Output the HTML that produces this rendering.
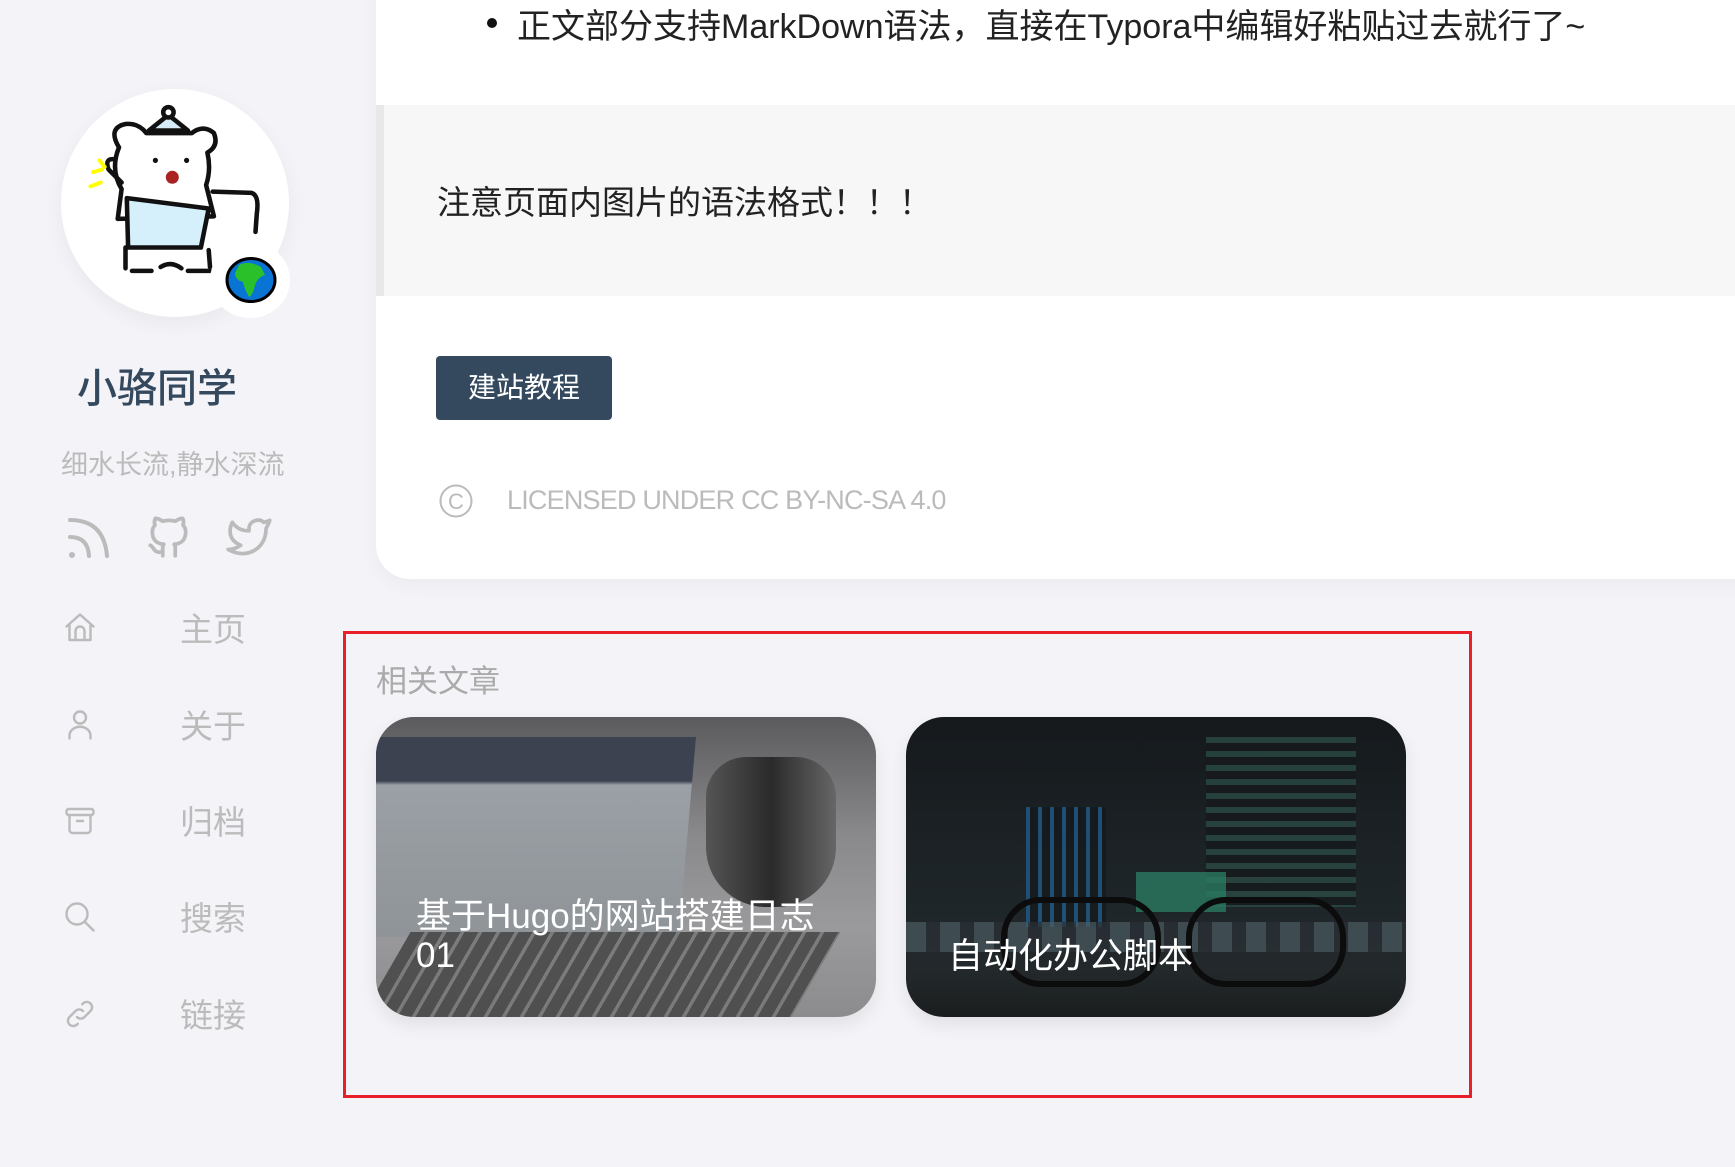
<!DOCTYPE html>
<html><head><meta charset="utf-8">
<style>
*{margin:0;padding:0;box-sizing:border-box}
html,body{width:1735px;height:1167px;overflow:hidden;background:#f4f4f8;font-family:"Liberation Sans","Noto Sans CJK SC",sans-serif}
.abs{position:absolute}
.main{position:absolute;left:376px;top:-40px;width:1400px;height:619px;background:#fff;border-radius:0 0 0 34px;box-shadow:0 6px 20px rgba(0,0,0,0.04)}
.t{position:absolute;white-space:nowrap}
.menu{color:#bbb;font-size:33px}
.card{position:absolute;top:717px;width:500px;height:300px;border-radius:38px;overflow:hidden;box-shadow:0 8px 18px rgba(0,0,0,0.08)}
.card .ti{position:absolute;color:#fff;font-size:35px;line-height:39px}
</style></head><body>

<div class="main"></div>
<div class="abs" style="left:487px;top:18px;width:10px;height:10px;border-radius:50%;background:#111"></div>
<div class="t" style="left:517px;top:-1px;font-size:34px;color:#222">正文部分支持MarkDown语法，直接在Typora中编辑好粘贴过去就行了~</div>
<div class="abs" style="left:376px;top:105px;width:1359px;height:191px;background:#f7f7f7;border-left:8px solid #e8e8e8"></div>
<div class="t" style="left:437px;top:176px;font-size:33px;color:#222">注意页面内图片的语法格式！！！</div>
<div class="abs" style="left:436px;top:356px;width:176px;height:64px;background:#34495e;border-radius:4px;color:#fff;font-size:28px;line-height:64px;text-align:center">建站教程</div>
<svg class="abs" style="left:438px;top:483px" width="36" height="36" viewBox="0 0 36 36"><circle cx="18" cy="18" r="15.5" fill="none" stroke="#bbb" stroke-width="2"/><text x="18" y="26" font-size="22" text-anchor="middle" fill="#bbb" font-family="Liberation Sans">C</text></svg>
<div class="t" style="left:507px;top:485px;font-size:27px;color:#bbb;letter-spacing:-0.8px">LICENSED UNDER CC BY-NC-SA 4.0</div>

<div class="abs" style="left:61px;top:89px;width:228px;height:228px;border-radius:50%;background:#fff;box-shadow:0 6px 20px rgba(0,0,0,0.05)"></div>
<svg class="abs" style="left:61px;top:89px" width="228" height="228" viewBox="0 0 228 228">
 <g transform="translate(110 100) scale(1.3) translate(-105 -95)">
 <g fill="none" stroke="#111" stroke-width="3.5" stroke-linecap="round" stroke-linejoin="round">
  <path d="M88 50 L103 38 L118 50 Z" fill="#d6ebf8"/>
  <circle cx="103" cy="36" r="4" fill="#fff"/>
  <path d="M65 63 Q56 48 70 45 Q80 44 86 52 L121 52 Q130 45 138 52 Q142 62 133 67 Q136 80 132 92 L138 116 L64 118 L67 95 Q58 80 65 63Z" fill="#fff"/>
  <path d="M71 102 L72 140 L128 140 L134 110 Z" fill="#d6f0fb"/>
  <path d="M137 97 L167 98 Q173 100 171 114 L170 128"/>
  <path d="M70 140 L70 156 M75 158 L90 158 M97 155 Q105 150 113 156 M118 158 L135 158 M134 142 L135 155"/>
  <path d="M67 90 L57 80 Q54 72 60 72"/>
 </g>
 <circle cx="106" cy="86" r="5" fill="#a22"/>
 <circle cx="93" cy="73" r="2" fill="#111"/><circle cx="117" cy="73" r="2" fill="#111"/>
 <path d="M45 82 L52 80 M43 93 L51 90 M50 73 L54 78" stroke="#ff0" stroke-width="3" stroke-linecap="round"/>
 </g>
</svg>
<div class="abs" style="left:210px;top:242px;width:80px;height:76px;border-radius:50%;background:#fff"></div>
<svg class="abs" style="left:225px;top:255px" width="52" height="50" viewBox="0 0 52 50"><ellipse cx="26" cy="25" rx="24" ry="21.5" fill="#0a74d4" stroke="#000" stroke-width="3"/><path d="M14 10 Q24 5 36 12 L40 20 Q33 22 30 30 Q28 40 24 42 Q19 33 18 27 Q10 25 10 18 Z" fill="#2ac02a"/></svg>

<div class="t" style="left:77px;top:356px;font-size:40px;color:#34495e;font-weight:500">小骆同学</div>
<div class="t" style="left:61px;top:443px;font-size:27px;color:#bbb">细水长流,静水深流</div>

<svg class="abs" style="left:62px;top:510px" width="52" height="52" viewBox="0 0 52 52" fill="none" stroke="#bbb" stroke-width="4" stroke-linecap="round"><circle cx="10" cy="45" r="3" fill="#bbb" stroke="none"/><path d="M8 27 Q26 27 27 46"/><path d="M8 10 Q42 10 45 46"/></svg>
<svg class="abs" style="left:144px;top:512px" width="50" height="50" viewBox="0 0 24 24" fill="none" stroke="#bbb" stroke-width="1.8" stroke-linecap="round" stroke-linejoin="round"><path d="M9 19c-4.3 1.4-4.3-2.5-6-3m12 5v-3.5c0-1 .1-1.4-.5-2 2.8-.3 5.5-1.4 5.5-6a4.6 4.6 0 0 0-1.3-3.2 4.2 4.2 0 0 0-.1-3.2s-1.1-.3-3.5 1.3a12.3 12.3 0 0 0-6.2 0C6.5 2.8 5.4 3.1 5.4 3.1a4.2 4.2 0 0 0-.1 3.2A4.6 4.6 0 0 0 4 9.5c0 4.6 2.7 5.7 5.5 6-.6.6-.6 1.2-.5 2V21"/></svg>
<svg class="abs" style="left:222px;top:512px" width="54" height="50" viewBox="0 0 24 24" fill="none" stroke="#bbb" stroke-width="1.8" stroke-linecap="round" stroke-linejoin="round"><path d="M22 4.01c-1 .49-1.98.689-3 .99-1.121-1.265-2.783-1.335-4.38-.737S11.977 6.323 12 8v1c-3.245.083-6.135-1.395-8-4 0 0-4.182 7.433 4 11-1.872 1.247-3.739 2.088-6 2 3.308 1.803 6.913 2.423 10.034 1.517 3.58-1.04 6.522-3.723 7.651-7.742a13.84 13.84 0 0 0 .497-3.753C20.18 7.773 21.692 5.25 22 4.009z"/></svg>

<svg class="abs" style="left:62px;top:610px" width="36" height="36" viewBox="0 0 24 24" fill="none" stroke="#bbb" stroke-width="1.6" stroke-linecap="round" stroke-linejoin="round"><path d="M3 11 L12 3 L21 11 M5 9.5 V20 H19 V9.5 M9 20 V14 a3 3 0 0 1 6 0 V20"/></svg>
<div class="t menu" style="left:180px;top:603px">主页</div>
<svg class="abs" style="left:62px;top:707px" width="36" height="36" viewBox="0 0 24 24" fill="none" stroke="#bbb" stroke-width="1.6" stroke-linecap="round"><circle cx="12" cy="7" r="4"/><path d="M5 21 v-2 a6 5 0 0 1 14 0 v2"/></svg>
<div class="t menu" style="left:180px;top:700px">关于</div>
<svg class="abs" style="left:62px;top:803px" width="36" height="36" viewBox="0 0 24 24" fill="none" stroke="#bbb" stroke-width="1.6" stroke-linecap="round" stroke-linejoin="round"><rect x="3" y="4" width="18" height="4" rx="1.5"/><path d="M5 8 v10 a2 2 0 0 0 2 2 h10 a2 2 0 0 0 2-2 V8 M10 12 h4"/></svg>
<div class="t menu" style="left:180px;top:796px">归档</div>
<svg class="abs" style="left:62px;top:899px" width="36" height="36" viewBox="0 0 24 24" fill="none" stroke="#bbb" stroke-width="1.6" stroke-linecap="round"><circle cx="10" cy="10" r="7"/><path d="M15 15 L21 21"/></svg>
<div class="t menu" style="left:180px;top:892px">搜索</div>
<svg class="abs" style="left:62px;top:996px" width="36" height="36" viewBox="0 0 24 24" fill="none" stroke="#bbb" stroke-width="1.6" stroke-linecap="round"><path d="M10 14a3.5 3.5 0 0 0 5 0l4-4a3.5 3.5 0 0 0-5-5l-.5.5"/><path d="M14 10a3.5 3.5 0 0 0-5 0l-4 4a3.5 3.5 0 0 0 5 5l.5-.5"/></svg>
<div class="t menu" style="left:180px;top:989px">链接</div>

<div class="abs" style="left:343px;top:631px;width:1129px;height:467px;border:3px solid #e8202a"></div>
<div class="t" style="left:376px;top:656px;font-size:31px;color:#aaa">相关文章</div>

<div class="card" style="left:376px;background:linear-gradient(180deg,#5b5b5d 0%,#8a8a8c 40%,#9a9a9c 70%,#8c8c8e 100%)">
 <div class="abs" style="left:0;top:20px;width:320px;height:200px;background:linear-gradient(180deg,#3c4250 0%,#3c4250 22%,#9ba0a6 24%,#8f9498 100%);transform:skewX(-5deg);transform-origin:0 0"></div>
 <div class="abs" style="left:330px;top:40px;width:130px;height:150px;border-radius:40px 40px 60px 60px;background:linear-gradient(90deg,#555,#2a2a2a,#666)"></div>
 <div class="abs" style="left:10px;top:215px;width:430px;height:85px;background:repeating-linear-gradient(90deg,#444 0 14px,#777 14px 18px);transform:skewX(-30deg);opacity:.85"></div>
 <div class="ti" style="left:40px;top:180px">基于Hugo的网站搭建日志<br>01</div>
</div>
<div class="card" style="left:906px;background:linear-gradient(180deg,#15191c 0%,#1e2529 60%,#23292b 85%,#1a1d1e 100%)">
 <div class="abs" style="left:300px;top:20px;width:150px;height:170px;background:repeating-linear-gradient(180deg,#2a4a44 0 6px,#15191c 6px 14px);opacity:.8"></div>
 <div class="abs" style="left:120px;top:90px;width:80px;height:120px;background:repeating-linear-gradient(90deg,#1f5b8a 0 4px,#15191c 4px 12px);opacity:.8"></div>
 <div class="abs" style="left:230px;top:155px;width:90px;height:40px;background:#2a7a62;opacity:.8"></div>
 <div class="abs" style="left:0;top:205px;width:500px;height:30px;background:repeating-linear-gradient(90deg,#4a5b62 0 20px,#2a3035 20px 34px);opacity:.7"></div>
 <div class="abs" style="left:95px;top:180px;width:160px;height:90px;border:6px solid #0c0c0c;border-radius:40px"></div>
 <div class="abs" style="left:280px;top:180px;width:160px;height:90px;border:6px solid #0c0c0c;border-radius:40px"></div>
 <div class="ti" style="left:42px;top:220px">自动化办公脚本</div>
</div>
</body></html>
